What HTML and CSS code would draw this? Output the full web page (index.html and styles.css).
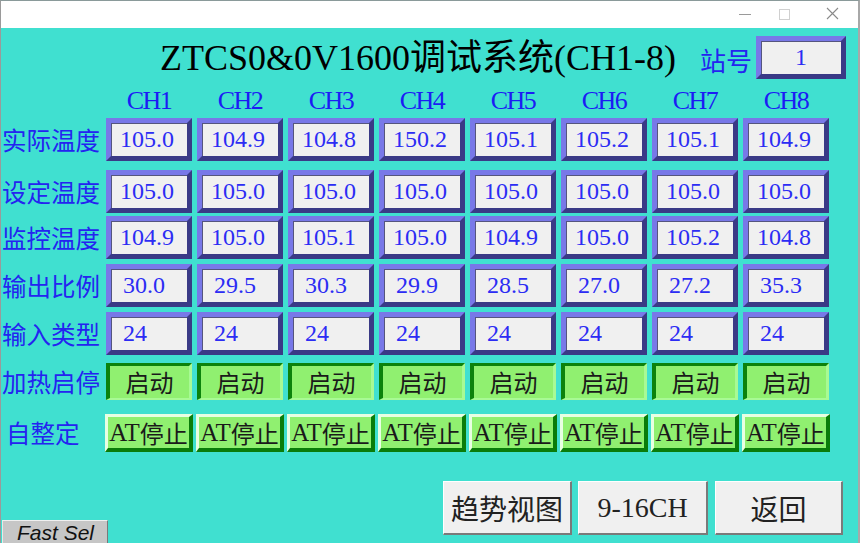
FILE: index.html
```html
<!DOCTYPE html>
<html>
  <head>
    <meta charset="UTF-8">
    <meta name="viewport" content="width=device-width, initial-scale=1.0">
    <title>ZTCS0&amp;0V1600调试系统</title>
    <link rel="stylesheet" href="styles.css">
  </head>
  <body>
    <div class="window">
      <!-- 标题栏 -->
      <div class="titlebar">
        <svg width="138" height="27" viewBox="0 0 138 27">
          <line x1="19" y1="13.5" x2="31" y2="13.5" stroke="#9a9a9a" stroke-width="1"/>
          <rect x="59.5" y="8.5" width="10" height="10" fill="none" stroke="#d0d0d0" stroke-width="1"/>
          <path d="M107 7 L118 18 M118 7 L107 18" stroke="#8a8a8a" stroke-width="1.1"/>
        </svg>
      </div>

      <div class="panel">
        <div class="head">
          <h1 class="title">ZTCS0&amp;0V1600调试系统(CH1-8)</h1>
          <span class="station">站号</span>
          <div class="val station-box">1</div>
        </div>

        <div class="row chs">
          <span></span>
          <span class="ch">CH1</span>
          <span class="ch">CH2</span>
          <span class="ch">CH3</span>
          <span class="ch">CH4</span>
          <span class="ch">CH5</span>
          <span class="ch">CH6</span>
          <span class="ch">CH7</span>
          <span class="ch">CH8</span>
        </div>

        <div class="row r1">
          <span class="label">实际温度</span>
          <div class="val">105.0</div>
          <div class="val">104.9</div>
          <div class="val">104.8</div>
          <div class="val">150.2</div>
          <div class="val">105.1</div>
          <div class="val">105.2</div>
          <div class="val">105.1</div>
          <div class="val">104.9</div>
        </div>

        <div class="row r2">
          <span class="label">设定温度</span>
          <div class="val">105.0</div>
          <div class="val">105.0</div>
          <div class="val">105.0</div>
          <div class="val">105.0</div>
          <div class="val">105.0</div>
          <div class="val">105.0</div>
          <div class="val">105.0</div>
          <div class="val">105.0</div>
        </div>

        <div class="row r3">
          <span class="label">监控温度</span>
          <div class="val">104.9</div>
          <div class="val">105.0</div>
          <div class="val">105.1</div>
          <div class="val">105.0</div>
          <div class="val">104.9</div>
          <div class="val">105.0</div>
          <div class="val">105.2</div>
          <div class="val">104.8</div>
        </div>

        <div class="row r4">
          <span class="label">输出比例</span>
          <div class="val pad">30.0</div>
          <div class="val pad">29.5</div>
          <div class="val pad">30.3</div>
          <div class="val pad">29.9</div>
          <div class="val pad">28.5</div>
          <div class="val pad">27.0</div>
          <div class="val pad">27.2</div>
          <div class="val pad">35.3</div>
        </div>

        <div class="row r5">
          <span class="label">输入类型</span>
          <div class="val pad">24</div>
          <div class="val pad">24</div>
          <div class="val pad">24</div>
          <div class="val pad">24</div>
          <div class="val pad">24</div>
          <div class="val pad">24</div>
          <div class="val pad">24</div>
          <div class="val pad">24</div>
        </div>

        <div class="row r6">
          <span class="label">加热启停</span>
          <div class="btn-on">启动</div>
          <div class="btn-on">启动</div>
          <div class="btn-on">启动</div>
          <div class="btn-on">启动</div>
          <div class="btn-on">启动</div>
          <div class="btn-on">启动</div>
          <div class="btn-on">启动</div>
          <div class="btn-on">启动</div>
        </div>

        <div class="row r7">
          <span class="label short">自整定</span>
          <div class="btn-at"><span class="lat">AT</span>停止</div>
          <div class="btn-at"><span class="lat">AT</span>停止</div>
          <div class="btn-at"><span class="lat">AT</span>停止</div>
          <div class="btn-at"><span class="lat">AT</span>停止</div>
          <div class="btn-at"><span class="lat">AT</span>停止</div>
          <div class="btn-at"><span class="lat">AT</span>停止</div>
          <div class="btn-at"><span class="lat">AT</span>停止</div>
          <div class="btn-at"><span class="lat">AT</span>停止</div>
        </div>

        <div class="footer">
          <div class="fast">Fast Sel</div>
          <div class="btns">
            <div class="btn trend">趋势视图</div>
            <div class="btn more">9-16CH</div>
            <div class="btn back">返回</div>
          </div>
        </div>
      </div>
    </div>
  </body>
</html>
```

FILE: styles.css
```css
* {
  margin: 0;
  padding: 0;
  box-sizing: border-box;
}

body {
  width: 860px;
  height: 543px;
  overflow: hidden;
  background: #40e0d0;
  font-family: "Noto Sans CJK SC", sans-serif;
}

.window {
  width: 860px;
  height: 543px;
  border-top: 1px solid #8a9a9a;
  border-left: 1px solid #9a9a9a;
  border-right: 2px solid #a8a8a8;
  background: #40e0d0;
}

.titlebar {
  height: 27px;
  background: #fff;
  display: flex;
  justify-content: flex-end;
}

.head {
  height: 56px;
  padding-top: 3px;
  display: flex;
  align-items: center;
}

.title {
  width: 699px;
  padding-left: 159px;
  font-family: "Liberation Serif", "Noto Sans CJK SC", serif;
  font-size: 36px;
  font-weight: normal;
  line-height: 40px;
  color: #000;
  white-space: nowrap;
}

.station {
  font-size: 26px;
  line-height: 30px;
  color: #2424f0;
  margin-top: 4px;
}

.val.station-box {
  width: 90px;
  margin-left: 4px;
  padding-left: 0;
  justify-content: center;
}

.row {
  display: grid;
  grid-template-columns: 100px repeat(8, 86px);
  column-gap: 5px;
  align-items: center;
}

.chs {
  height: 34px;
}

.ch {
  text-align: center;
  font-family: "Liberation Serif", serif;
  font-size: 26px;
  letter-spacing: -1.5px;
  line-height: 30px;
  color: #1c1cf4;
}

.r2 {
  margin-top: 9px;
}
.r3 {
  margin-top: 3px;
}
.r4 {
  margin-top: 5px;
}
.r5 {
  margin-top: 5px;
}
.r6 {
  margin-top: 8px;
}
.r7 {
  margin-top: 14px;
}

.label {
  padding-left: 1px;
  font-size: 24.5px;
  line-height: 28px;
  color: #2424f0;
  white-space: nowrap;
}
.label.short {
  padding-left: 5px;
}

.val {
  height: 43px;
  display: flex;
  align-items: center;
  padding-left: 9px;
  border: 5px solid;
  border-color: #7878e8 #3a3a86 #3a3a86 #7878e8;
  background: #f0f0f0;
  box-shadow: inset 1px 1px 0 #55557e;
  font-family: "Liberation Serif", serif;
  font-size: 24px;
  color: #2c2cf4;
}
.val.pad {
  padding-left: 12px;
}

.btn-on {
  height: 37px;
  display: flex;
  align-items: center;
  justify-content: center;
  border-style: solid;
  border-width: 3px 3px 2px 4px;
  border-color: #0c820c #a8fa94 #a8fa94 #0c820c;
  background: #90f070;
  font-size: 24px;
  line-height: 28px;
  color: #1a1a1a;
}

.btn-at {
  height: 38px;
  margin: 0 -1px;
  display: flex;
  align-items: center;
  justify-content: center;
  border-style: solid;
  border-width: 3px 4px 4px 3px;
  border-color: #e8ffe2 #0a7c0a #0a7c0a #e8ffe2;
  background: #90f070;
  font-size: 24px;
  line-height: 28px;
  color: #1a1a1a;
  white-space: nowrap;
}
.btn-at .lat {
  font-family: "Liberation Serif", serif;
  font-size: 25px;
}

.footer {
  margin-top: 29px;
  display: flex;
  align-items: flex-start;
}

.fast {
  width: 106px;
  height: 30px;
  margin-left: 1px;
  margin-top: 39px;
  padding-left: 14px;
  background: #c6c6c6;
  border-top: 1px solid #f0f0f0;
  border-left: 1px solid #e8e8e8;
  border-right: 1px solid #7a7a7a;
  font-family: "Liberation Sans", sans-serif;
  font-style: italic;
  font-size: 21px;
  line-height: 24px;
  color: #111;
}

.btns {
  margin-left: auto;
  margin-right: 15px;
  display: flex;
}

.btn {
  height: 54px;
  display: flex;
  align-items: center;
  justify-content: center;
  background: #f0f0f0;
  border-top: 1px solid #fff;
  border-left: 1px solid #fff;
  border-right: 2px solid #7a7a7a;
  border-bottom: 2px solid #7a7a7a;
  font-size: 28px;
  color: #222;
}
.trend {
  width: 129px;
}
.more {
  width: 130px;
  margin-left: 6px;
  font-family: "Liberation Serif", serif;
  font-size: 28px;
}
.back {
  width: 128px;
  margin-left: 7px;
}
```
